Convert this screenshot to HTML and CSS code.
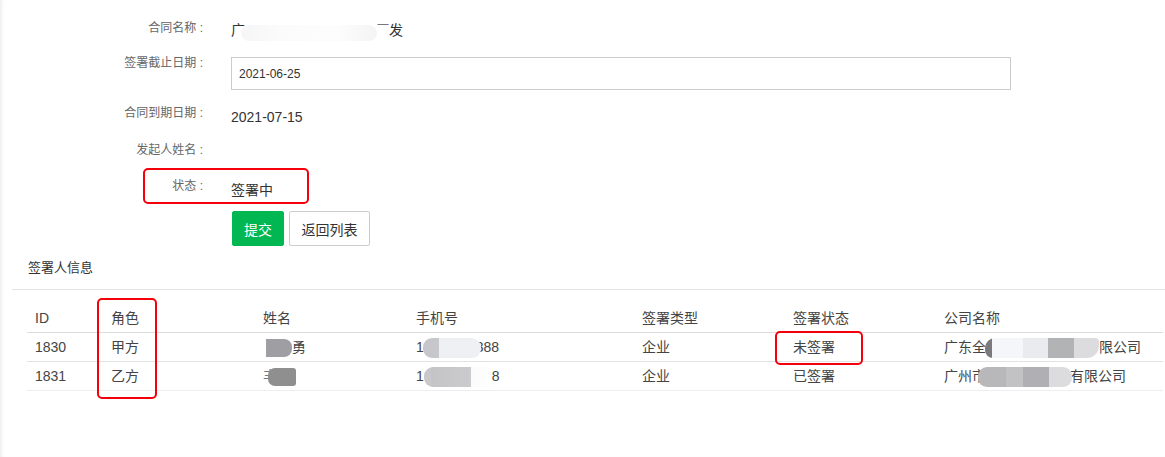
FILE: index.html
```html
<!DOCTYPE html>
<html lang="zh-CN">
<head>
<meta charset="utf-8">
<title>合同详情</title>
<link rel="stylesheet" href="styles.css">
</head>
<body>
<div class="page">
  <div class="form">
    <div class="row row-1">
      <div class="label">合同名称 :</div>
      <div class="value value-name">广<span class="blur-white"></span><span class="part-top">一</span>发</div>
    </div>
    <div class="row row-2">
      <div class="label">签署截止日期 :</div>
      <div class="field"><input class="input" type="text" value="2021-06-25"></div>
    </div>
    <div class="row row-3">
      <div class="label">合同到期日期 :</div>
      <div class="value">2021-07-15</div>
    </div>
    <div class="row row-4">
      <div class="label">发起人姓名 :</div>
      <div class="value"></div>
    </div>
    <div class="row row-5">
      <div class="label">状态 :</div>
      <div class="value">签署中</div>
    </div>
    <div class="actions">
      <button class="btn btn-primary">提交</button>
      <button class="btn btn-default">返回列表</button>
    </div>
  </div>

  <div class="section-title">签署人信息</div>

  <table class="signers">
    <colgroup>
      <col class="c-id"><col class="c-role"><col class="c-name"><col class="c-phone"><col class="c-type"><col class="c-status"><col class="c-company">
    </colgroup>
    <thead>
      <tr><th>ID</th><th>角色</th><th>姓名</th><th>手机号</th><th>签署类型</th><th>签署状态</th><th>公司名称</th></tr>
    </thead>
    <tbody>
      <tr>
        <td>1830</td>
        <td>甲方</td>
        <td><span class="blob name-1"></span>勇</td>
        <td>1<span class="blob phone-1"></span>388</td>
        <td>企业</td>
        <td>未签署</td>
        <td>广东全<span class="blob comp-1"></span>限公司</td>
      </tr>
      <tr>
        <td>1831</td>
        <td>乙方</td>
        <td><span class="hint">丰</span><span class="blob name-2"></span></td>
        <td>1<span class="blob phone-2"></span>8</td>
        <td>企业</td>
        <td>已签署</td>
        <td>广州市<span class="blob comp-2"></span>有限公司</td>
      </tr>
    </tbody>
  </table>

  <div class="mark mark-status"></div>
  <div class="mark mark-role"></div>
  <div class="mark mark-sign"></div>
</div>
</body>
</html>
```

FILE: styles.css
```css
html, body {
  margin: 0;
  padding: 0;
  background: #fff;
}
body {
  font-family: "Liberation Sans", "Noto Sans CJK SC", sans-serif;
  color: #333;
  box-shadow: inset 4px 0 4px -3px #e6e6e6;
  min-height: 457px;
}
.page {
  position: relative;
  width: 1165px;
  height: 457px;
  overflow: hidden;
}
.form {
  padding-top: 18px;
}
.row {
  display: flex;
  align-items: flex-start;
}
.row-1 { height: 35px; }
.row-2 { height: 50px; }
.row-3 { height: 37px; }
.row-4 { height: 36px; }
.row-5 { height: 35px; }
.label {
  width: 203px;
  flex: none;
  text-align: right;
  font-size: 12px;
  line-height: 20px;
  color: #666;
}
.value {
  margin-left: 28px;
  margin-top: 4px;
  font-size: 14px;
  line-height: 20px;
  color: #333;
}
.value-name {
  margin-top: 1px;
  display: flex;
  align-items: center;
}
.blur-white {
  display: inline-block;
  width: 136px;
  height: 16px;
  margin-top: 6px;
  background: linear-gradient(90deg, #f6f6f6 0, #fbfbfb 30%, #fdfdfd 70%, #f4f4f4 100%);
  border-radius: 8px;
  margin-left: -4px;
}
.part-top {
  display: inline-block;
  color: #777;
  font-size: 12px;
  transform: translateY(-4px);
}
.field {
  margin-left: 28px;
  margin-top: 4px;
}
.input {
  box-sizing: border-box;
  width: 780px;
  height: 33px;
  border: 1px solid #ccc;
  border-radius: 0;
  padding: 0 7px;
  font-family: "Liberation Sans", "Noto Sans CJK SC", sans-serif;
  font-size: 12px;
  color: #333;
  background: #fff;
  outline: none;
}
.actions {
  display: flex;
  gap: 5px;
  padding-left: 232px;
}
.btn {
  height: 35px;
  box-sizing: border-box;
  border-radius: 2px;
  font-family: "Liberation Sans", "Noto Sans CJK SC", sans-serif;
  font-size: 14px;
  padding: 0;
  cursor: pointer;
}
.btn-primary {
  width: 52px;
  background: #00b752;
  border: 1px solid #00b752;
  color: #fff;
}
.btn-default {
  width: 81px;
  background: #fff;
  border: 1px solid #ccc;
  color: #333;
}
.section-title {
  margin: 0 0 0 12px;
  padding: 12px 0 11px 16px;
  font-size: 13px;
  line-height: 20px;
  color: #333;
  border-bottom: 1px solid #e4e4e4;
}
.signers {
  margin: 14px 0 0 27px;
  width: 1136px;
  border-collapse: collapse;
  table-layout: fixed;
  font-size: 14px;
  color: #444;
}
.c-id { width: 76px; }
.c-role { width: 152px; }
.c-name { width: 153px; }
.c-phone { width: 226px; }
.c-type { width: 151px; }
.c-status { width: 151px; }
.c-company { width: 227px; }
.signers th,
.signers td {
  text-align: left;
  font-weight: normal;
  padding: 0 8px;
  white-space: nowrap;
}
.signers th {
  height: 28px;
  line-height: 28px;
  border-bottom: 1px solid #dcdcdc;
}
.signers td {
  height: 28px;
  line-height: 28px;
  border-bottom: 1px solid #e2e2e2;
}
.signers tbody tr:last-child td {
  border-bottom-color: #eeeeee;
}
.blob {
  display: inline-block;
  vertical-align: middle;
  height: 18px;
  position: relative;
  z-index: 1;
}
.name-1 {
  width: 26px;
  margin-left: 3px;
  background: #9e9ea3;
  border-radius: 0 8px 8px 0;
}
.name-2 {
  width: 28px;
  margin-left: -9px;
  background: #8f8f8f;
  border-radius: 7px 3px 3px 7px;
}
.hint {
  color: #777;
}
.phone-1 {
  width: 58px;
  margin-left: -1px;
  margin-right: -5px;
  background: linear-gradient(90deg, #c7c7cb 0, #c7c7cb 28%, #eef0f4 28%, #eef0f4 100%);
  border-radius: 9px;
  height: 20px;
}
.phone-2 {
  width: 68px;
  background: linear-gradient(90deg, #c9c9cb 0, #c9c9cb 10%, #c4c4c6 10%, #cbcbcd 69%, #fbfbfb 69%, #ffffff 100%);
  border-radius: 9px 0 0 9px;
  height: 20px;
}
.comp-1 {
  width: 114px;
  margin-left: -1px;
  height: 20px;
  background: linear-gradient(90deg, #7a7a7c 0, #7a7a7c 6%, #f4f6fa 6%, #f4f6fa 33%, #e9ebee 33%, #e9ebee 55%, #b2b3b4 55%, #b2b3b4 78%, #dcdcdf 78%, #dcdcdf 100%);
  border-radius: 10px 4px 12px 8px;
}
.comp-2 {
  width: 94px;
  margin-left: -8px;
  margin-right: -2px;
  height: 20px;
  background: linear-gradient(90deg, #b8b8ba 0, #b8b8ba 30%, #c2c2c4 30%, #c2c2c4 48%, #b0afb3 48%, #b0afb3 76%, #dcdcde 76%, #dcdcde 100%);
  border-radius: 9px;
}
.mark {
  position: absolute;
  box-sizing: border-box;
  border: 2px solid #f5000a;
  border-radius: 5px;
  pointer-events: none;
}
.mark-status {
  left: 143px;
  top: 168px;
  width: 166px;
  height: 36px;
}
.mark-role {
  left: 97px;
  top: 298px;
  width: 60px;
  height: 101px;
}
.mark-sign {
  left: 775px;
  top: 331px;
  width: 88px;
  height: 34px;
}
```
